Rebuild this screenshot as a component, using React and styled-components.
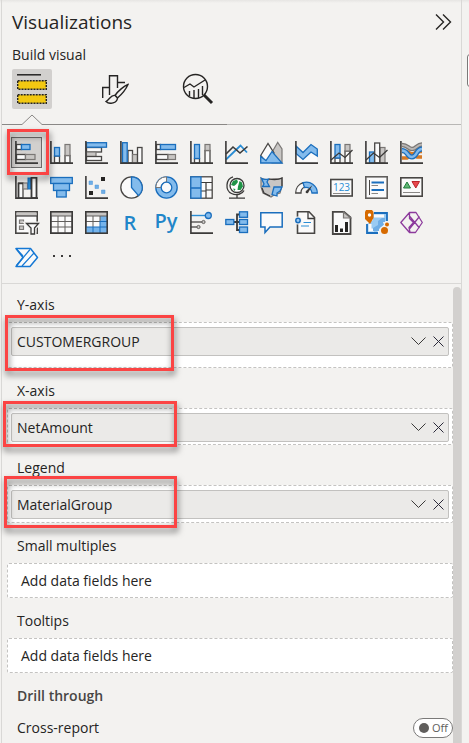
import React from "react";
import styled, { createGlobalStyle } from "styled-components";

const GlobalStyle = createGlobalStyle`
  * { box-sizing: border-box; }
  body {
    margin: 0;
    background: #f3f2f0;
    color: #252423;
    font-family: "Open Sans", "Noto Sans", sans-serif;
    font-size: 14px;
    line-height: 20px;
  }
  button { font: inherit; color: inherit; border: 0; padding: 0; background: none; cursor: pointer; }
  svg { display: block; }
`;

const Page = styled.div`
  display: flex;
  min-height: 100vh;
  padding-left: 1px;
  overflow: hidden;
  background: linear-gradient(#e6e5e3, #f3f2f0 3px);
`;

const Panel = styled.section`
  display: flex;
  flex-direction: column;
  flex: 1;
  min-width: 0;
  border: solid #d9d8d6;
  border-width: 0 1px;
`;

const Rail = styled.aside`
  width: 7px;
  padding: 54px 0 0 5px;
  overflow: hidden;
`;

const RailTab = styled.button`
  width: 24px;
  height: 33px;
  border: 1px solid #7a7978;
  border-radius: 3px;
  background: #fff;
`;

const Header = styled.header`
  display: flex;
  align-items: center;
  justify-content: space-between;
  padding: 8px 7px 0 10px;
`;

const Title = styled.h1`
  margin: 0;
  font-size: 19px;
  font-weight: 500;
  line-height: 28px;
`;

const Subtitle = styled.h2`
  margin: 9px 0 4px 10px;
  font-size: 14px;
  font-weight: 500;
  line-height: 20px;
`;

const CollapseButton = styled.button`
  width: 20px;
  height: 20px;
`;

const Tabs = styled.nav`
  display: flex;
  gap: 43px;
  padding-left: 10px;
`;

const Tab = styled.button`
  display: grid;
  place-items: center;
  width: 40px;
  height: 40px;
  border-radius: 2px;
  background: ${(p) => (p.$active ? "#d2d0ce" : "transparent")};
`;

const TabRule = styled.div`
  display: flex;
  align-items: flex-end;
  height: 16px;

  &::after {
    content: "";
    flex: 1;
    height: 1px;
    background: #b8b7b5;
  }
`;

const Gallery = styled.div`
  display: grid;
  grid-template-columns: repeat(auto-fill, 35px);
  grid-auto-rows: 35px;
  padding: 10px 7px 8px;
  border-bottom: 1px solid #d9d8d6;
`;

const VisualCell = styled.div`
  position: relative;
  display: grid;
  place-items: center;
`;

const VisualButton = styled.button`
  display: grid;
  place-items: center;
  width: 31px;
  height: 31px;
  border: 1px solid ${(p) => (p.$selected ? "#6f6e6d" : "transparent")};
  background: ${(p) => (p.$selected ? "#d2d0ce" : "transparent")};
`;

const Callout = styled.span`
  position: absolute;
  z-index: 1;
  inset: ${(p) => p.$inset};
  width: ${(p) => p.$width || "auto"};
  border: 3px solid #fb4444;
  pointer-events: none;
  filter: drop-shadow(1px 4px 3px rgba(0, 0, 0, 0.55));
`;

const FieldArea = styled.div`
  display: flex;
  flex: 1;
  padding-top: 3px;
`;

const Fields = styled.div`
  flex: 1;
  min-width: 0;
  padding: 8px 0 0 5px;
`;

const ScrollThumb = styled.div`
  width: 8px;
  border-radius: 4px 4px 0 0;
  background: #d2d0ce;
`;

const Field = styled.section`
  margin-bottom: 13px;
`;

const FieldLabel = styled.h3`
  margin: 0 0 7px 10px;
  font-size: 14px;
  font-weight: ${(p) => (p.$strong ? 600 : 400)};
  line-height: 20px;
  color: ${(p) => (p.$strong ? "#484644" : "inherit")};
`;

const Well = styled.div`
  position: relative;
  height: ${(p) => p.$height}px;
  padding: 4px 3px 0;
  border: 1px dashed #c4c3c1;
  border-radius: 2px;
  background: #fff;
`;

const Pill = styled.div`
  display: flex;
  align-items: center;
  gap: 5px;
  height: 29px;
  padding: 0 2px 0 5px;
  border: 1px solid #c2c1bf;
  border-radius: 2px;
  background: #ebeae8;
`;

const PillText = styled.span`
  flex: 1;
`;

const PillButton = styled.button`
  width: 15px;
  height: 15px;
`;

const Placeholder = styled.div`
  padding-left: 10px;
  line-height: 26px;
`;

const SettingRow = styled.label`
  display: flex;
  align-items: center;
  justify-content: space-between;
  margin-top: 12px;
  padding-left: 10px;
`;

const Toggle = styled.span`
  display: flex;
  align-items: center;
  gap: 3px;
  width: 40px;
  height: 20px;
  padding-left: 5px;
  border: 1px solid #7a7978;
  border-radius: 10px;
  background: #fff;
  color: #605e5c;
  font-size: 11px;
`;

const ToggleInput = styled.input`
  appearance: none;
  width: 10px;
  height: 10px;
  margin: 0;
  border-radius: 50%;
  background: #605e5c;
`;

const dark = { fill: "none", stroke: "#3b3a39", strokeWidth: 1.6 };
const blue = { fill: "#83bbec", stroke: "#1a6ebd", strokeWidth: 1.3 };
const grey = { fill: "#c8c6c4", stroke: "#7a7775", strokeWidth: 1.2 };
const white = { fill: "#fafafa", stroke: "#484644", strokeWidth: 1.3 };

const Axis = () => <path {...dark} d="M.9 0V22.1H23" />;
const Bar = ({ box: [x, y, w, h], look }) => <rect x={x} y={y} width={w} height={h} {...look} />;

const visuals = [
  ["Stacked bar chart", <><Bar box={[1.5, 3.5, 5, 5]} look={white} /><Bar box={[6.5, 3.5, 8.5, 5]} look={blue} /><Bar box={[1.5, 13.5, 9, 5]} look={white} /><Bar box={[10.5, 13.5, 9.5, 5]} look={grey} /><Axis /></>],
  ["Stacked column chart", <><Bar box={[4.5, 15, 5, 7]} look={white} /><Bar box={[4.5, 6.5, 5, 8.5]} look={blue} /><Bar box={[15, 14.5, 5, 7.5]} look={white} /><Bar box={[15, 3.5, 5, 11]} look={grey} /><Axis /></>],
  ["Clustered bar chart", <><Bar box={[1.5, 6.5, 15, 4.5]} look={white} /><Bar box={[1.5, 11, 9.5, 4.5]} look={grey} /><Bar box={[1.5, 15.5, 15, 4]} look={white} /><Bar box={[1.5, 1.7, 20, 4.5]} look={blue} /><Axis /></>],
  ["Clustered column chart", <><Bar box={[8, 9.5, 4.5, 12.5]} look={white} /><Bar box={[12.5, 13.5, 5, 8.5]} look={grey} /><Bar box={[17.5, 6.5, 4.5, 15.5]} look={white} /><Bar box={[2.5, 1.7, 4.7, 20]} look={blue} /><Axis /></>],
  ["100% stacked bar chart", <><Bar box={[1.5, 3.5, 4, 5]} look={white} /><Bar box={[5.5, 3.5, 15, 5]} look={blue} /><Bar box={[1.5, 13.5, 11.5, 5]} look={white} /><Bar box={[13, 13.5, 7.5, 5]} look={grey} /><Axis /></>],
  ["100% stacked column chart", <><Bar box={[4.5, 17.5, 5, 4.5]} look={white} /><Bar box={[4.5, 3.5, 5, 14]} look={blue} /><Bar box={[15, 9.5, 5, 12.5]} look={white} /><Bar box={[15, 3.5, 5, 6]} look={grey} /><Axis /></>],
  ["Line chart", <><path d="M1 18.5 15.5 4.5 22 11.5" fill="none" stroke="#2a8dd4" strokeWidth="1.8" /><path {...dark} d="M1 13 8 6 15 12 22.5 5.5" /><Axis /></>],
  ["Area chart", <><path {...grey} d="M11 13 17.7 1.5 22 8V22H12z" /><path {...white} d="M.7 14.5 8 2.5 14 12 6 21z" /><path {...blue} d="M.7 22V15.5L6 19.5 12 10.5 22 22z" /></>],
  ["Stacked area chart", <><path d="M1 13 8 19 16 12 22 15V22H1z" fill="#fafafa" /><path {...blue} d="M1 5 8 11.5 16 3.5 22.3 8V15L16 11 8 18.5 1 12.5z" /><Axis /></>],
  ["Line and stacked column chart", <><Bar box={[5, 17, 5, 5]} look={white} /><Bar box={[5, 3.5, 5, 13.5]} look={blue} /><Bar box={[15, 10, 5, 12]} look={white} /><Bar box={[15, 3.5, 5, 6.5]} look={grey} /><path {...dark} strokeWidth="1.3" d="M1 19 9 12 15 16.5 22.5 9" /><Axis /></>],
  ["Line and clustered column chart", <><Bar box={[4.5, 11, 5, 11]} look={blue} /><Bar box={[15, 6.5, 5, 15.5]} look={grey} /><Bar box={[9.7, 2, 5, 20]} look={white} /><path {...dark} strokeWidth="1.3" d="M1 19 8.5 12 14.5 16.5 22.5 9" /><Axis /></>],
  ["Ribbon chart", <><path d="M2 10.5H7L17 16H22M2 17H7L17 10.5H22" fill="none" stroke="#d67a25" strokeWidth="3.5" /><path d="M2 4C8 4 8 8 12 8S17 3.5 22 3.5" fill="none" stroke="#7a7775" strokeWidth="4.5" /><path d="M2 4C8 4 8 8 12 8S17 3.5 22 3.5" fill="none" stroke="#b9b7b5" strokeWidth="2" /><path d="M2 9.5C8 9.5 7 16 12 16S16 8 22 8" fill="none" stroke="#1a6ebd" strokeWidth="5" /><path d="M2 9.5C8 9.5 7 16 12 16S16 8 22 8" fill="none" stroke="#83bbec" strokeWidth="2.4" /><Axis /></>],
  ["Waterfall chart", <><Bar box={[3.5, 7, 4.5, 15]} look={white} /><Bar box={[8, 7, 4.5, 6]} look={grey} /><Bar box={[13, 2, 2.5, 11]} look={{ fill: "#2a8dd4", stroke: "#1a6ebd" }} /><Bar box={[16.5, 1.7, 5, 20]} look={white} /><path {...dark} d="M8 7.5H3.5V22M16.5 22V1.7H21.5V22" /><Axis /></>],
  ["Funnel chart", <><Bar box={[0.7, 1.5, 21.6, 6]} look={blue} /><Bar box={[3.5, 7.5, 16, 7]} look={blue} /><Bar box={[6.7, 14.5, 9.5, 6.5]} look={blue} /></>],
  ["Scatter chart", <><path fill="#252423" d="M16 1h4v4h-4zM4 15h4v4H4z" /><path fill="#6faee6" stroke="#4a95d8" strokeWidth=".5" d="M4 5h3.5v3.5H4zM10 9h3.5v3.5H10zM16.5 14H20v3.5h-3.5z" /><Axis /></>],
  ["Pie chart", <><circle cx="11.5" cy="11.5" r="10.7" {...white} /><path {...blue} d="M11.5.8A10.7 10.7 0 0 1 18.5 19.6L11.5 11.5z" /></>],
  ["Donut chart", <><circle cx="11.5" cy="11.5" r="10.7" {...blue} /><path d="M11.5.8A10.7 10.7 0 0 0 .8 11.5H6A5.5 5.5 0 0 1 11.5 6z" fill="#fafafa" stroke="#7a7775" /><circle cx="11.5" cy="11.5" r="5.3" fill="#fafafa" stroke="#1a6ebd" strokeWidth="1.3" /></>],
  ["Treemap", <><Bar box={[0.8, 0.8, 21.4, 21.4]} look={white} /><path {...dark} strokeWidth="1.2" d="M11 6.5H22M16 6.5V22M11 15H16M16 14H22" /><path {...blue} d="M.8.8H11V22.2H.8zM.8 12H11" /></>],
  ["Map", <><path {...dark} strokeWidth="1.3" d="M8 .8C.5 3 0 14.500 6.500 17.500c5 2.500 11 .5 12.500-3M12 19v3M4 22.2H20" /><circle cx="12" cy="9.5" r="7" fill="#fff" stroke="#3b3a39" strokeWidth="1.3" /><path fill="#1f9447" d="M8 5 12 3.5 13 6 11 8.5 9 10 6 9zM14.500 5 17 6.500 18 10.500 15.500 14 12.500 14 13 10.500zM8 12.500 10.500 13 9.500 15z" /></>],
  ["Filled map", <><path d="M1 2C5 4 8 4 11 3S19 4 22 2V10L20 17 14 19 11 21 3 17 1 11z" {...grey} /><path {...blue} d="M1.5 2.5C4 4 6 3.5 8.5 3L7 6 9.5 10.5H2.5L4 8z" /><path {...blue} d="M14 11H22L20 15 17 17V20L12 18.5z" /><path {...dark} strokeWidth="1.2" d="M9 3C14 4 18 4 22 2V10M2 12 4 17 10 20" /></>],
  ["Gauge", <><path {...white} d="M.7 17A10.8 10.8 0 0 1 8 6.7L10 11A6 6 0 0 0 6 17z" /><path {...blue} d="M8 6.7A10.8 10.8 0 0 1 22.3 17H17A6 6 0 0 0 9.5 11.5z" /><path d="M17.5 9 13 17C11 18 10 16 11 15z" fill="#3b3a39" /></>],
  ["Card", <><Bar box={[0.8, 3.5, 21.4, 16.5]} look={{ ...white, strokeWidth: 1.6 }} /><text x="11.5" y="14.5" textAnchor="middle" fontSize="10" fill="#2a8dd4">123</text><path stroke="#8a8886" d="M3 17.5H20" /></>],
  ["Multi-row card", <><Bar box={[0.8, 0.8, 21.4, 21.4]} look={{ ...white, stroke: "#605e5c", strokeWidth: 1.6 }} /><path stroke="#484644" d="M4.5 4V19" /><path stroke="#1a6ebd" strokeWidth="2.2" d="M6.5 6.5H19M6.5 14H19" /><path stroke="#8a8886" d="M6.5 9.5H13M6.5 17.5H13" /></>],
  ["KPI", <><Bar box={[0.8, 1.8, 21.4, 18.4]} look={{ ...white, strokeWidth: 1.6 }} /><path d="M3.5 12 7 6 10.5 12z" fill="#5fb573" stroke="#1f7d3b" /><path d="M12 5.5H19.5L15.8 12z" fill="#e8484d" stroke="#b8262c" /><path stroke="#8a8886" d="M3 16.5H20" /></>],
  ["Slicer", <><Bar box={[0.8, 0.8, 21.4, 21.4]} look={{ ...white, strokeWidth: 1.6 }} /><path d="M1.5 1.5H21.5V5H1.5z" fill="#c8c6c4" /><path {...dark} strokeWidth="1.2" d="M1 5H22" /><path {...grey} d="M4.5 9H8.5V12.5H4.5zM4.5 15H8.5V18.5H4.5z" /><path d="M11.5 12.5H23.5L19.5 17V23H15.5V17z" fill="#fff" stroke="#f3f2f0" strokeWidth="4" /><path d="M11.5 12.5H23.5L19.5 17V23H16V17z" fill="#fafafa" stroke="#3b3a39" strokeWidth="1.3" /></>],
  ["Table", <><Bar box={[0.8, 0.8, 21.4, 21.4]} look={white} /><path d="M1 1H22V5H1z" fill="#c8c6c4" /><path stroke="#605e5c" d="M1 5H22M1 10.5H22M1 16H22M8 5V22M15 5V22" /><Bar box={[0.8, 0.8, 21.4, 21.4]} look={dark} /></>],
  ["Matrix", <><Bar box={[0.8, 0.8, 21.4, 21.4]} look={white} /><path d="M1 1H22V5H1z" fill="#c8c6c4" /><path fill="#75b3ea" d="M15 5H22V22H1V16H15z" /><path stroke="#605e5c" d="M1 5H22M1 10.5H15M8 5V16M15 5V10" /><path stroke="#1a6ebd" d="M1 16H22M15 10.5H22M15 10V22M8 16V22" /><Bar box={[0.8, 0.8, 21.4, 21.4]} look={dark} /></>],
  ["R script visual", <text x="10" y="18.5" textAnchor="middle" fontSize="20" fontWeight="600" fill="#1f86c9">R</text>],
  ["Python visual", <text x="11" y="16.5" textAnchor="middle" fontSize="20" fontWeight="600" fill="#1f86c9">Py</text>],
  ["Key influencers", <><path d="M1 4.5H16" stroke="#2a8dd4" strokeWidth="1.4" /><path d="M1 11H12M1 16H7" stroke="#605e5c" strokeWidth="1.3" /><circle cx="18.3" cy="4.5" r="3" {...blue} /><circle cx="13.5" cy="11" r="1.6" fill="#c8c6c4" stroke="#605e5c" /><circle cx="8.5" cy="16" r="1.6" fill="#c8c6c4" stroke="#605e5c" /><Axis /></>],
  ["Decomposition tree", <><path {...dark} strokeWidth="1.8" d="M9 11H14M14.5 3.5H12V19H14.5" /><Bar box={[0.8, 8.5, 8, 5]} look={blue} /><Bar box={[14.5, 0.8, 8, 5.5]} look={blue} /><Bar box={[14.5, 8.5, 8, 5]} look={blue} /><Bar box={[14.5, 16, 8, 5.5]} look={blue} /></>],
  ["Q&A", <path d="M.8 1.8H22.2V16H10L5 21.5V16H.8z" fill="#fafafa" stroke="#1a6ebd" strokeWidth="1.5" />],
  ["Smart narrative", <><path d="M2.5.8H14L19.5 6.5V22.2H2.5z" {...white} strokeWidth="1.6" /><path {...dark} strokeWidth="1.3" d="M13 1V7.5H19.5" /><path d="M8.5 11.5H16M6 15H14" stroke="#2a8dd4" strokeWidth="1.2" /><circle cx="3" cy="9.5" r="4" fill="#f3f2f0" /><circle cx="3" cy="9.5" r="2.2" fill="#9ccaf2" stroke="#1a6ebd" strokeWidth="1.5" /></>],
  ["Paginated report", <><path d="M2.8.8H14L20.5 6.5V23H2.8z" {...white} strokeWidth="1.8" /><path {...grey} d="M13.5 1V7H20.5z" /><path d="M5 14H8V21H5zM10 17.5H13V21H10zM15 11H18V21H15z" fill="#252423" /></>],
  ["ArcGIS Maps", <><Bar box={[2, 2, 20, 20]} look={{ fill: "#fafafa" }} /><path d="M2 22V13L8 9V2H22V10C17 10 18 15 14 16S15 22 11 22z" fill="#9acbf2" /><path d="M9 5H19M5 13V19H9" fill="none" stroke="#fafafa" strokeWidth="3" /><path d="M9 2H22V10M2 13V22H13" fill="none" stroke="#1a6ebd" strokeWidth="1.8" /><path d="M17 7H20V13L15 17V20H8V17L13 14V10z" fill="#6faee6" /><path d="M1-1H7L8.5 1V7L5 13 0 8V1z" fill="#d66a00" /><circle cx="4.5" cy="4" r="1.7" fill="#fff" /><path d="M14 23V18L19 14 18 11H25V24z" fill="#f3f2f0" /><circle cx="19.500" cy="19.5" r="3.5" fill="#d66a00" /><circle cx="22" cy="13.5" r="2" fill="#d66a00" /></>],
  ["Power Apps", <path d="M.8 11.5 9.5 1.5H16L22.3 11.5 15.5 21.5H9.5zM9 4.5 19.5 17M19.5 5.5 9 18.5M9.5 2V7.5L13.5 11.5 9 16.5 10 21.5" fill="none" stroke="#8c3a9c" strokeWidth="1.3" strokeLinejoin="round" />],
  ["Power Automate", <><path d="M1 2.5H15.5L22.5 11.5 15 20.5H1L8 11.5z" fill="#fafafa" stroke="#1578d4" strokeWidth="1.5" strokeLinejoin="round" /><path d="M1.5 19.5 15 3.5M7 20 19 7M1 2.5 8 10" fill="none" stroke="#1578d4" strokeWidth="1.2" /></>],
  ["Get more visuals", <path fill="#3b3a39" d="M3 9h2v2h-2zM11 9h2v2h-2zM19 9h2v2h-2z" />],
];

const VisualIcon = ({ children }) => (
  <svg width="23" height="23" viewBox="0 0 23 23" overflow="visible" aria-hidden="true">{children}</svg>
);

const BuildIcon = () => (
  <svg width="30" height="30" viewBox="0 0 30 30" aria-hidden="true">
    <path d="M0 .8H24" stroke="#252423" strokeWidth="1.5" />
    <path d="M.7 6.7H29.3V15.3H.7zM.7 20.7H29.3V29.3H.7z" fill="#f2c811" stroke="#252423" strokeWidth="1.4" strokeDasharray="2 1" />
  </svg>
);

const FormatIcon = () => (
  <svg width="28" height="30" viewBox="0 0 28 30" fill="none" stroke="#252423" strokeWidth="1.4" aria-hidden="true">
    <path d="M1.7 24V13.5H8.5M8.5 21V1.7H16.5V14M16.5 8.5H24" />
    <path d="M27 10.5C23 12 17 17 14 21.5L16.5 24C20 21 25 15 27 10.5z" fill="#f3f2f0" />
    <path d="M14 21.5C10 20.5 9 25 5 27.5 9 31 16 29 16.5 24z" fill="#f3f2f0" />
  </svg>
);

const AnalyticsIcon = () => (
  <svg width="32" height="32" viewBox="0 0 32 32" fill="none" stroke="#252423" strokeWidth="1.4" aria-hidden="true">
    <circle cx="13.5" cy="13.5" r="12" />
    <path d="M2 14.5 8 11 12 14 23 7M7.5 18V23M12 17V25M16.5 16V25M20.5 13V22" />
    <path d="M22 22 30 30" strokeWidth="3" />
  </svg>
);

const ChevronDown = () => (
  <svg width="15" height="15" viewBox="0 0 15 15" fill="none" stroke="#3b3a39" aria-hidden="true">
    <path d="M.5 3.5 7.5 10.5 14.5 3.5" />
  </svg>
);

const Cross = () => (
  <svg width="15" height="15" viewBox="0 0 15 15" fill="none" stroke="#2b2a3a" aria-hidden="true">
    <path d="M2.5 2.5 12.5 12.5M12.5 2.5 2.5 12.5" />
  </svg>
);

const fields = [
  { label: "Y-axis", value: "CUSTOMERGROUP", height: 46, callout: "-8px auto -4px -3px", width: "169px" },
  { label: "X-axis", value: "NetAmount", height: 37, callout: "-8px auto -3px -5px", width: "174px" },
  { label: "Legend", value: "MaterialGroup", height: 38, callout: "-10px auto -6px -4px", width: "173px" },
  { label: "Small multiples", height: 35 },
  { label: "Tooltips", height: 35 },
];

const DataField = ({ label, value, height, callout, width }) => (
  <Field>
    <FieldLabel>{label}</FieldLabel>
    <Well $height={height}>
      {value ? (
        <Pill>
          <PillText>{value}</PillText>
          <PillButton aria-label={`${value} options`}><ChevronDown /></PillButton>
          <PillButton aria-label={`Remove ${value}`}><Cross /></PillButton>
        </Pill>
      ) : (
        <Placeholder>Add data fields here</Placeholder>
      )}
      {callout && <Callout $inset={callout} $width={width} />}
    </Well>
  </Field>
);

export default function App() {
  return (
    <Page>
      <GlobalStyle />
      <Panel>
        <Header>
          <Title>Visualizations</Title>
          <CollapseButton aria-label="Collapse pane">
            <svg width="20" height="20" viewBox="0 0 20 20" fill="none" stroke="#252423" strokeWidth="1.4">
              <path d="M2 2.5 9.5 10 2 17.5M9 2.5 16.5 10 9 17.5" />
            </svg>
          </CollapseButton>
        </Header>
        <Subtitle>Build visual</Subtitle>
        <Tabs>
          <Tab $active aria-label="Build visual"><BuildIcon /></Tab>
          <Tab aria-label="Format visual"><FormatIcon /></Tab>
          <Tab aria-label="Analytics"><AnalyticsIcon /></Tab>
        </Tabs>
        <TabRule>
          <svg width="225" height="12" viewBox="0 0 225 12" fill="none" stroke="#8a8886" aria-hidden="true">
            <path d="M0 11.5H20L30 2 40 11.5H225" />
          </svg>
        </TabRule>
        <Gallery>
          {visuals.map(([name, drawing], i) => (
            <VisualCell key={name}>
              <VisualButton $selected={i === 0} aria-label={name}>
                <VisualIcon>{drawing}</VisualIcon>
              </VisualButton>
              {i === 0 && <Callout $inset="-6px -5px -5px -2px" />}
            </VisualCell>
          ))}
        </Gallery>
        <FieldArea>
          <Fields>
            {fields.map((field) => <DataField key={field.label} {...field} />)}
            <FieldLabel $strong>Drill through</FieldLabel>
            <SettingRow>
              Cross-report
              <Toggle><ToggleInput type="checkbox" role="switch" />Off</Toggle>
            </SettingRow>
          </Fields>
          <ScrollThumb />
        </FieldArea>
      </Panel>
      <Rail><RailTab aria-label="Open pane" /></Rail>
    </Page>
  );
}
